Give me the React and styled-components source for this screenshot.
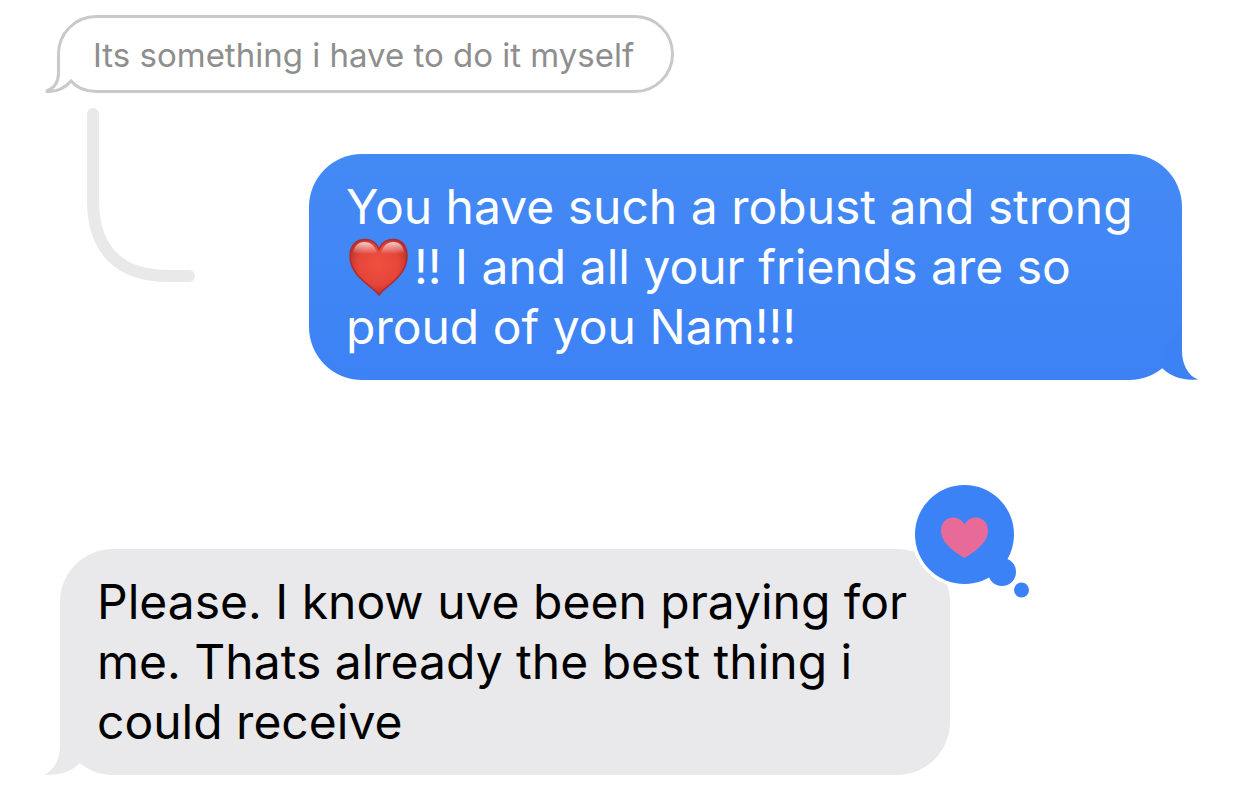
import React from "react";
import styled, { createGlobalStyle } from "styled-components";

const GlobalStyle = createGlobalStyle`
  body {
    margin: 0;
    background: #fff;
    font-family: Inter, "Liberation Sans", sans-serif;
  }
`;

const Conversation = styled.main`
  display: flex;
  flex-direction: column;
  padding: 15px 60px 13px 57px;
`;

const Quote = styled.blockquote`
  position: relative;
  align-self: flex-start;
  margin: 0;
  padding: 17px 37px 15px 33px;
  border: 3px solid #c9c9c9;
  border-radius: 39px;
  color: #8e8e8e;
  font-size: 33px;
  line-height: 40px;
`;

const QuoteText = styled.span`
  position: relative;
`;

const QuoteTail = styled.svg`
  position: absolute;
  left: -16px;
  bottom: -3px;
  width: 56px;
  height: 40px;
`;

const ReplyRow = styled.section`
  display: grid;
  grid-template-columns: 252px 1fr;
  margin-top: 15px;
`;

const Connector = styled.svg`
  width: 108px;
  height: 174px;
  margin-left: 30px;
`;

const Bubble = styled.div`
  position: relative;
  padding: 23px 37px;
  border-radius: 53px;
  font-size: 48px;
  line-height: 60px;
  color: ${({ $sent }) => ($sent ? "#fff" : "#000")};
  background: ${({ $sent }) =>
    $sent ? "linear-gradient(#448af5, #3d82f5)" : "#e9e9eb"};
  margin: ${({ $sent }) => ($sent ? "46px 0 0" : "169px 232px 0 3px")};
`;

const Message = styled.p`
  position: relative;
  margin: 0;
`;

const BubbleTail = styled.svg`
  position: absolute;
  bottom: 0;
  width: 40px;
  height: 56px;
  fill: ${({ $sent }) => ($sent ? "#3d82f5" : "#e9e9eb")};
  ${({ $sent }) => ($sent ? "right: -16px; transform: scaleX(-1);" : "left: -16px;")}
`;

const Emoji = styled.svg`
  width: 64px;
  height: 60px;
  margin-right: 4px;
  vertical-align: top;
`;

const Reaction = styled.button`
  position: absolute;
  top: -68px;
  right: -81px;
  padding: 0;
  border: 0;
  background: none;
  cursor: pointer;

  svg {
    display: block;
    width: 120px;
    height: 120px;
  }
`;

function Tail({ sent }) {
  return (
    <BubbleTail $sent={sent} viewBox="0 0 40 56" aria-hidden="true">
      <path d="M16 1V27C16 40 10 52 0 55.500C16 57.500 29 51 36 44L30 20Z" />
    </BubbleTail>
  );
}

function RedHeart() {
  return (
    <Emoji viewBox="0 0 64 60" role="img" aria-label="red heart">
      <defs>
        <radialGradient id="heartFill" cx="0.5" cy="0.45" r="0.6">
          <stop offset="0" stopColor="#f0503e" />
          <stop offset="0.6" stopColor="#e5463a" />
          <stop offset="1" stopColor="#b42b26" />
        </radialGradient>
        <linearGradient id="heartShine" x1="0" y1="0" x2="0" y2="1">
          <stop offset="0" stopColor="#fff" stopOpacity="0.75" />
          <stop offset="1" stopColor="#fff" stopOpacity="0" />
        </linearGradient>
      </defs>
      <path
        d="M33 58C27 49 4 40 4 19C4 9 10 2.500 18.500 2.500C25 2.500 30.500 6 33 12C35.500 6 41 2.500 47.500 2.500C56 2.500 61 9 61 19C61 40 39 49 33 58Z"
        fill="url(#heartFill)"
        stroke="#b32a2a"
        strokeWidth="1.500"
      />
      <path
        d="M7 17C8 9 12 5 18.500 5C25 5 29 9 31.500 17Z"
        fill="url(#heartShine)"
      />
      <path
        d="M58.500 17C57.500 9 54 5 47.500 5C41 5 37 9 34.500 17Z"
        fill="url(#heartShine)"
      />
    </Emoji>
  );
}

export default function App() {
  return (
    <>
      <GlobalStyle />
      <Conversation>
        <Quote>
          <QuoteTail viewBox="0 0 56 40" aria-hidden="true">
            <path d="M13 0V22C13 32 9 38 2 39H56V0Z" fill="#fff" />
            <path d="M12 22H56V40H12Z" fill="#fff" />
            <path
              d="M14.500 0V20C14.500 29 10 35.500 2 38.500C13 39 21 35 27 28C33 35 42 38.500 52 38.500H56"
              fill="none"
              stroke="#c9c9c9"
              strokeWidth="3"
            />
          </QuoteTail>
          <QuoteText>Its something i have to do it myself</QuoteText>
        </Quote>

        <ReplyRow>
          <Connector viewBox="0 0 108 174" aria-hidden="true">
            <path
              d="M6 6V92C6 140 30 168 82 168H102"
              fill="none"
              stroke="#e9e9e9"
              strokeWidth="12"
              strokeLinecap="round"
            />
          </Connector>
          <Bubble $sent>
            <Tail sent />
            <Message>
              You have such a robust and strong <RedHeart />
              !! I and all your friends are so proud of you Nam!!!
            </Message>
          </Bubble>
        </ReplyRow>

        <Bubble>
          <Tail />
          <Message>
            Please. I know uve been praying for me. Thats already the best thing i could receive
          </Message>
          <Reaction type="button" aria-label="Loved">
            <svg viewBox="0 0 120 120" aria-hidden="true">
              <circle cx="53.500" cy="53.500" r="53" fill="#fff" />
              <g fill="#3b82f6">
                <circle cx="53.500" cy="53.500" r="49.500" />
                <circle cx="91" cy="91" r="14" />
                <circle cx="110.500" cy="109" r="7.500" />
              </g>
              <path
                d="M53.500 77C47 73 30 63 30 50C30 42 35 36.500 42 36.500C47 36.500 51 39 53.500 43.500C56 39 60 36.500 65 36.500C72 36.500 77 42 77 50C77 63 60 73 53.500 77Z"
                fill="#e76a98"
              />
            </svg>
          </Reaction>
        </Bubble>
      </Conversation>
    </>
  );
}
